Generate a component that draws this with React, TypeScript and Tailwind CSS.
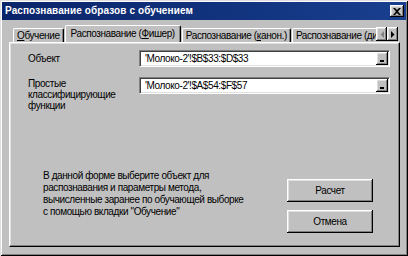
import React from "react";

const raised =
  "shadow-[inset_-1px_-1px_0_#000,inset_1px_1px_0_#fff,inset_-2px_-2px_0_#808080,inset_2px_2px_0_#dfdfdf]";

function InactiveTab({ children }: { children: React.ReactNode }) {
  return (
    <div className="h-[14px] px-[3px] flex items-center bg-[#c0c0c0] border-t border-l border-white border-r border-r-black shadow-[inset_-1px_0_0_#808080] rounded-tl-[2px] rounded-tr-[2px] whitespace-nowrap leading-[12px] mr-[1px] shrink-0">
      {children}
    </div>
  );
}

function Field({ value }: { value: string }) {
  return (
    <div className="w-[251px] h-[17px] bg-white flex items-center border-t border-l border-[#808080] border-r border-b border-r-white border-b-white shadow-[inset_1px_1px_0_#404040,inset_-1px_-1px_0_#dfdfdf]">
      <div className="flex-1 pl-[5px] leading-[12px] whitespace-nowrap overflow-hidden">{value}</div>
      <div className={`w-[12px] h-[13px] mr-[1px] bg-[#c0c0c0] ${raised} flex items-end justify-center pb-[3px]`}>
        <div className="w-[4px] h-[2px] bg-black" />
      </div>
    </div>
  );
}

function Button({ children }: { children: React.ReactNode }) {
  return (
    <div className={`w-[86px] h-[23px] bg-[#c0c0c0] ${raised} flex items-center justify-center leading-[12px]`}>
      {children}
    </div>
  );
}

export default function App() {
  return (
    <div className="w-[408px] h-[256px] bg-[#c0c0c0] p-[2px] flex flex-col overflow-hidden text-black text-[10px] font-['Liberation_Sans',Arial,sans-serif] shadow-[inset_1px_1px_0_#dfdfdf,inset_-1px_-1px_0_#000,inset_2px_2px_0_#fff,inset_-2px_-2px_0_#808080]">
      {/* Title bar */}
      <div className="h-[18px] flex items-center justify-between pl-[3px] pr-[2px] bg-gradient-to-r from-[#0a246a] to-[#183f8e]">
        <span className="text-white font-bold text-[10px] leading-[12px] whitespace-nowrap tracking-[0.1px]">
          Распознавание образов с обучением
        </span>
        <div className={`w-[14px] h-[12px] bg-[#c0c0c0] ${raised} flex items-center justify-center`}>
          <svg width="8" height="7" viewBox="0 0 8 7">
            <path d="M0 0h2l2 2 2-2h2L5 3.5 8 7H6L4 5 2 7H0l3-3.5z" fill="#000" />
          </svg>
        </div>
      </div>

      {/* Body */}
      <div className="flex-1 min-w-0 flex flex-col pl-[7px] pr-[6px] pt-[5px] pb-[7px] tracking-[-0.4px]">
        {/* Tabs row */}
        <div className="relative w-full h-[17px] flex items-end pl-[4px] overflow-hidden">
          <InactiveTab>
            <span>
              <u className="underline-offset-[1px]">О</u>бучение
            </span>
          </InactiveTab>
          <div className="relative z-10 h-[18px] -mb-[1px] px-[5px] flex items-start pt-[2px] bg-[#c0c0c0] border-t border-l border-white border-r border-r-black shadow-[inset_-1px_0_0_#808080] rounded-tl-[2px] rounded-tr-[2px] whitespace-nowrap leading-[12px] mr-[1px] shrink-0">
            <span>
              Распознавание (<u className="underline-offset-[1px]">Ф</u>ишер)
            </span>
          </div>
          <InactiveTab>
            <span>
              Распознавание (<u className="underline-offset-[1px]">к</u>анон.)
            </span>
          </InactiveTab>
          <InactiveTab>
            <span>
              Распознавание (<u className="underline-offset-[1px]">д</u>и
            </span>
          </InactiveTab>
          {/* scroll arrows overlay */}
          <div className="absolute right-0 bottom-0 h-[15px] pr-[2px] flex bg-[#c0c0c0] z-20">
            <div className={`w-[11px] h-[14px] bg-[#c0c0c0] ${raised} flex items-center justify-center`}>
              <svg width="4" height="7" viewBox="0 0 4 7">
                <path d="M4 0v7L0.5 3.5z" fill="#808080" />
              </svg>
            </div>
            <div className={`w-[11px] h-[14px] bg-[#c0c0c0] ${raised} flex items-center justify-center`}>
              <svg width="4" height="7" viewBox="0 0 4 7">
                <path d="M0 0v7l3.5-3.5z" fill="#000" />
              </svg>
            </div>
          </div>
        </div>

        {/* Panel */}
        <div className="flex-1 flex flex-col border-t border-l border-white border-r border-b border-r-black border-b-black shadow-[inset_-1px_-1px_0_#808080,inset_1px_1px_0_#dfdfdf]">
          <div className="pt-[7px] pl-[18px] flex flex-col gap-[10px]">
            <div className="flex items-center">
              <div className="w-[111px] leading-[12px]">Объект</div>
              <Field value="'Молоко-2'!$B$33:$D$33" />
            </div>
            <div className="flex items-start">
              <div className="w-[111px] leading-[11px] pt-[1px]">
                Простые
                <br />
                классифицирующие
                <br />
                функции
              </div>
              <Field value="'Молоко-2'!$A$54:$F$57" />
            </div>
          </div>

          <div className="mt-auto pb-[13px] flex items-start">
            <div className="w-[277px] shrink-0 pl-[33px] leading-[12px]">
              В данной форме выберите объект для
              <br />
              распознавания и параметры метода,
              <br />
              вычисленные заранее по обучающей выборке
              <br />
              с помощью вкладки "Обучение"
            </div>
            <div className="mt-[9px] flex flex-col gap-[8px]">
              <Button>Расчет</Button>
              <Button>Отмена</Button>
            </div>
          </div>
        </div>
      </div>
    </div>
  );
}
